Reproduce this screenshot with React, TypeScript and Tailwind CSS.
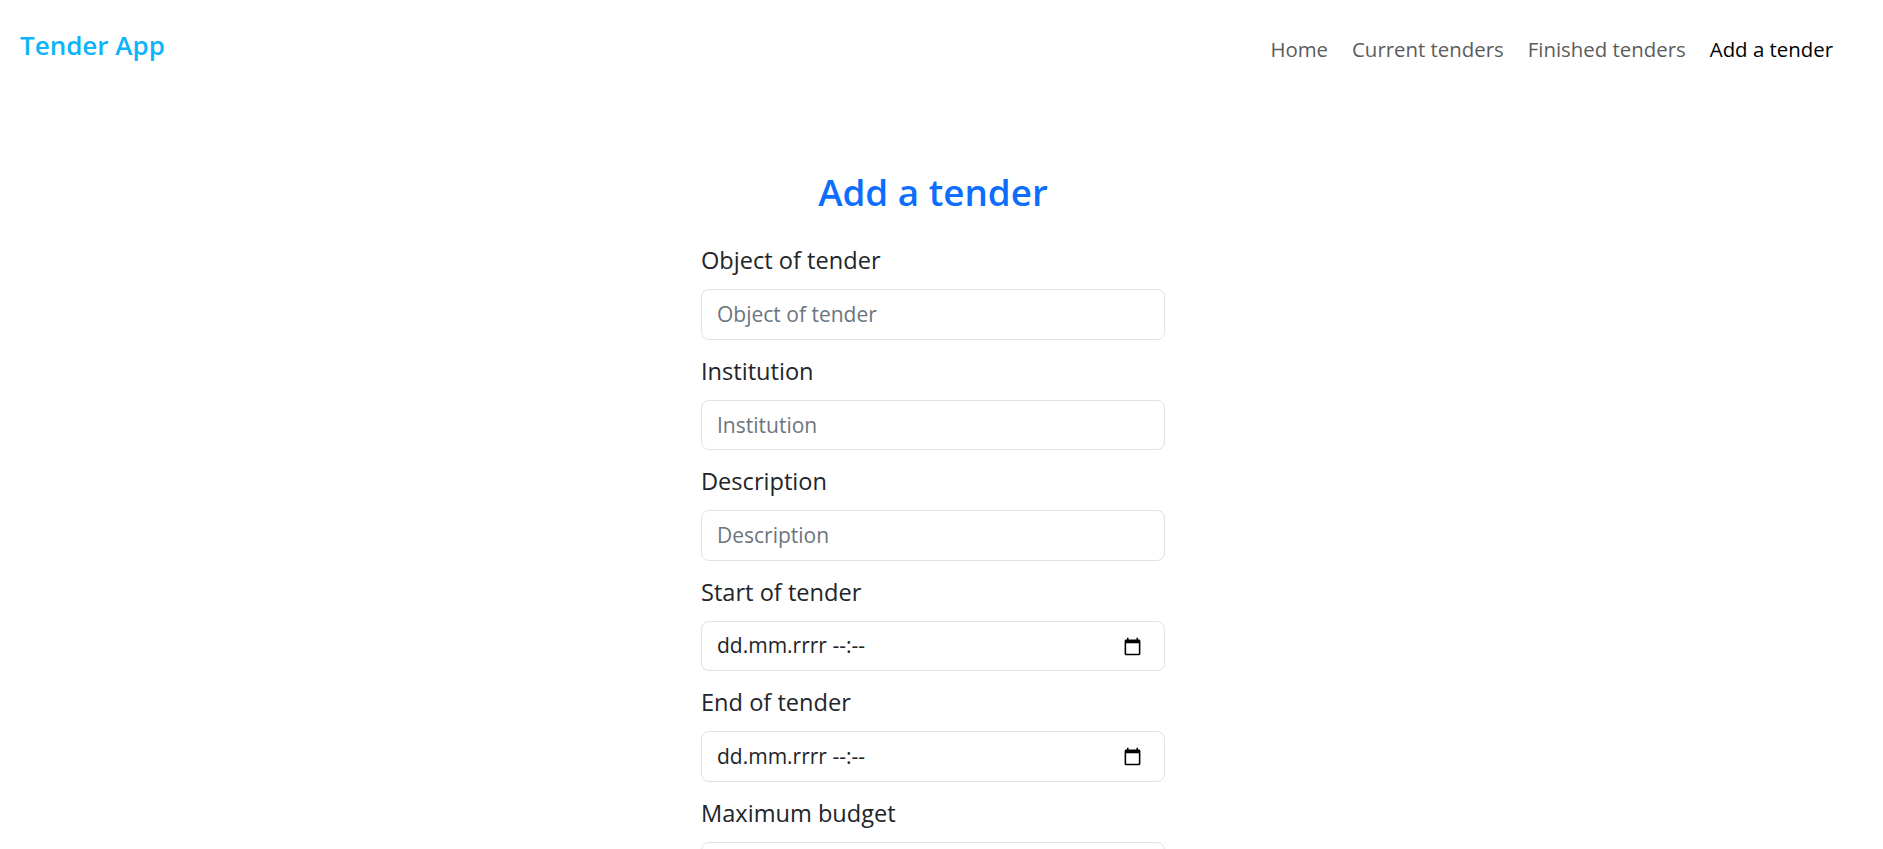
const navLinks = [
  { href: "#home", label: "Home", active: false },
  { href: "#current", label: "Current tenders", active: false },
  { href: "#finished", label: "Finished tenders", active: false },
  { href: "#add", label: "Add a tender", active: true },
];

const textFields = [
  { id: "object", label: "Object of tender" },
  { id: "institution", label: "Institution" },
  { id: "description", label: "Description" },
];

const dateFields = [
  { id: "start", label: "Start of tender" },
  { id: "end", label: "End of tender" },
];

function CalendarIcon() {
  return (
    <svg viewBox="0 0 24 24" className="h-[19px] w-[19px] fill-black" aria-hidden="true">
      <path d="M20 3h-1V1h-2v2H7V1H5v2H4c-1.1 0-2 .9-2 2v16c0 1.1.9 2 2 2h16c1.1 0 2-.9 2-2V5c0-1.1-.9-2-2-2zm0 18H4V8h16v13z" />
    </svg>
  );
}

function FieldLabel({ htmlFor, children }: { htmlFor: string; children: string }) {
  return (
    <label htmlFor={htmlFor} className="block text-[23.6px] leading-[35px] text-[#212529]">
      {children}
    </label>
  );
}

const inputClass =
  "mt-[11px] block h-[50.6px] w-full rounded-[8px] border border-[#dee2e6] bg-white px-[15px] text-[21px] text-[#212529] outline-none placeholder:text-[#6c757d]";

export default function App() {
  return (
    <div className="h-[849px] overflow-hidden bg-white font-['Open_Sans',sans-serif]">
      <header className="flex justify-between pl-[20px] pr-[38px]">
        <a href="#home" className="pt-[30px] text-[26px] font-semibold leading-[30px] text-[#0cb4fb]">
          Tender App
        </a>
        <ul className="flex pt-[34px]">
          {navLinks.map((item) => (
            <li key={item.href}>
              <a
                href={item.href}
                className={`block px-[12px] text-[20.4px] leading-[30px] ${
                  item.active ? "text-black" : "text-[#5c5c5c]"
                }`}
              >
                {item.label}
              </a>
            </li>
          ))}
        </ul>
      </header>

      <main className="pr-[17px]">
        <div className="mx-auto w-[464px]">
          <h2 className="mt-[104px] text-center text-[36.8px] font-semibold leading-[48px] text-[#0d6efd]">
            Add a tender
          </h2>
          <form className="mt-[27px] flex flex-col gap-[14px]">
            {textFields.map((field) => (
              <div key={field.id}>
                <FieldLabel htmlFor={field.id}>{field.label}</FieldLabel>
                <input id={field.id} type="text" placeholder={field.label} className={inputClass} />
              </div>
            ))}
            {dateFields.map((field) => (
              <div key={field.id}>
                <FieldLabel htmlFor={field.id}>{field.label}</FieldLabel>
                <div
                  id={field.id}
                  className="mt-[11px] flex h-[50.6px] items-center justify-between rounded-[8px] border border-[#dee2e6] pl-[15px] pr-[22px]"
                >
                  <span className="text-[21px] text-[#212529]">dd.mm.rrrr --:--</span>
                  <CalendarIcon />
                </div>
              </div>
            ))}
            <div>
              <FieldLabel htmlFor="budget">Maximum budget</FieldLabel>
              <input id="budget" type="number" placeholder="Maximum budget" className={inputClass} />
            </div>
            <button type="submit" className="self-start rounded-[8px] bg-[#0d6efd] px-[15px] py-[8px] text-[21px] text-white">
              Add tender
            </button>
          </form>
        </div>
      </main>
    </div>
  );
}
